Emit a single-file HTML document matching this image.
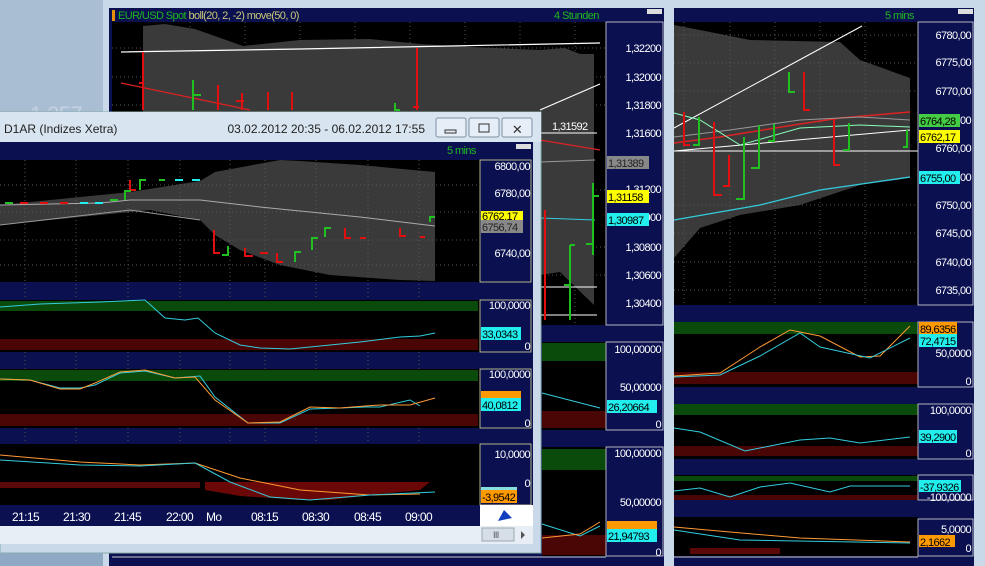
<!DOCTYPE html>
<html><head><meta charset="utf-8"><style>
html,body{margin:0;padding:0;width:985px;height:566px;overflow:hidden;background:#0a1050}
svg{display:block}
text{font-family:"Liberation Sans",sans-serif;letter-spacing:-0.6px}
</style></head><body>
<svg width="985" height="566" viewBox="0 0 985 566" xmlns="http://www.w3.org/2000/svg">
<rect x="0" y="0" width="985" height="566" fill="#0a1050"/>
<rect x="0" y="0" width="105" height="566" fill="#a9bdd3"/>
<text x="30" y="122" font-size="22" fill="#c4d2e2">1,357</text>

<!-- ===== Window 1 (EUR/USD) ===== -->
<rect x="103" y="0" width="567" height="566" fill="#c9d9ea"/>
<rect x="109" y="8" width="555" height="558" fill="#0a1050"/>
<rect x="112" y="22" width="494" height="303" fill="#000"/>
<g stroke="#555" stroke-dasharray="1,3">
<line x1="112" y1="48" x2="606" y2="48"/><line x1="112" y1="77" x2="606" y2="77"/><line x1="112" y1="105" x2="606" y2="105"/><line x1="540" y1="190" x2="606" y2="190"/><line x1="540" y1="247" x2="606" y2="247"/><line x1="540" y1="275" x2="606" y2="275"/>
<line x1="190" y1="22" x2="190" y2="110"/><line x1="245" y1="22" x2="245" y2="110"/><line x1="300" y1="22" x2="300" y2="110"/><line x1="355" y1="22" x2="355" y2="110"/><line x1="410" y1="22" x2="410" y2="110"/><line x1="465" y1="22" x2="465" y2="110"/><line x1="520" y1="22" x2="520" y2="110"/><line x1="575" y1="22" x2="575" y2="325"/>
</g>
<text x="118" y="19" font-size="11" fill="#1fb81f">EUR/USD Spot <tspan fill="#c8c878">boll(20, 2, -2) move(50, 0)</tspan></text>
<rect x="112" y="10" width="3" height="11" fill="#e89000"/>
<text x="554" y="19" font-size="11" fill="#1fb81f">4 Stunden</text>
<rect x="647" y="9" width="15" height="5" fill="#ddd"/>
<polygon points="143,26 165,24 195,29 243,46 300,40 370,39 420,44 470,47 540,50 565,48 580,54 594,54 594,305 560,272 540,275 540,160 143,160" fill="#3a3a3a"/>
<polyline points="121,52 300,49 450,46 600,43" fill="none" stroke="#fff" stroke-width="1.2"/>
<polyline points="121,83 250,110" fill="none" stroke="#d22" stroke-width="1.2"/>
<polyline points="540,140 600,150" fill="none" stroke="#d22" stroke-width="1.2"/>
<polyline points="540,162 595,160" fill="none" stroke="#999" stroke-width="1"/>
<polyline points="540,218 595,220" fill="none" stroke="#3cd" stroke-width="1"/>
<polyline points="540,110 600,84" fill="none" stroke="#fff" stroke-width="1.2"/>
<line x1="540" y1="133" x2="597" y2="133" stroke="#fff"/>
<line x1="540" y1="287" x2="597" y2="287" stroke="#fff"/>
<line x1="540" y1="315" x2="597" y2="315" stroke="#fff"/>
<text x="552" y="130" font-size="11" fill="#fff">1,31592</text>
<g stroke="#e01010" stroke-width="2" fill="none">
<path d="M143,52V110 M139,83h4 M218,85V110 M242,93V110M236,101h8 M268,92V110 M292,92V110 M417,48V110 M413,107h6 M545,210V320"/>
</g>
<g stroke="#1fc01f" stroke-width="2" fill="none">
<path d="M193,80V110 M193,95h8 M395,103V110h5 M593,183V255M593,196h6 M586,244h7 M570,245V320M570,285h-6 M575,245h-5"/>
</g>
<rect x="606" y="22" width="57" height="303" fill="#0a1050" stroke="#ddd" stroke-width="0.8"/>
<g font-size="11" fill="#fff" text-anchor="end">
<text x="661" y="52">1,32200</text><text x="661" y="81">1,32000</text><text x="661" y="109">1,31800</text><text x="661" y="137">1,31600</text><text x="661" y="193">1,31200</text><text x="661" y="221">1,31000</text><text x="661" y="251">1,30800</text><text x="661" y="279">1,30600</text><text x="661" y="307">1,30400</text>
</g>
<rect x="607" y="156" width="42" height="13" fill="#888"/><text x="608" y="167" font-size="11" fill="#222">1,31389</text>
<rect x="607" y="190" width="42" height="13" fill="#ff0"/><text x="608" y="201" font-size="11" fill="#000">1,31158</text>
<rect x="607" y="213" width="42" height="13" fill="#2ee"/><text x="608" y="224" font-size="11" fill="#000">1,30987</text>
<rect x="542" y="342" width="64" height="88" fill="#000"/>
<rect x="542" y="343" width="64" height="18" fill="#0a4a0a"/>
<rect x="542" y="411" width="64" height="17" fill="#4a0505"/>
<polyline points="542,393 600,408" stroke="#3cd" fill="none"/>
<rect x="606" y="342" width="57" height="88" fill="#0a1050" stroke="#ddd" stroke-width="0.8"/>
<g font-size="11" fill="#fff" text-anchor="end"><text x="661" y="353">100,00000</text><text x="661" y="391">50,00000</text><text x="661" y="428">0</text></g>
<rect x="607" y="400" width="50" height="13" fill="#2ee"/><text x="608" y="411" font-size="11" fill="#000">26,20664</text>
<rect x="542" y="447" width="64" height="109" fill="#000"/>
<rect x="542" y="449" width="64" height="21" fill="#0a4a0a"/>
<rect x="542" y="535" width="64" height="20" fill="#4a0505"/>
<polyline points="542,524 580,536 600,526" stroke="#3cd" fill="none"/>
<polyline points="542,538 580,534 600,522" stroke="#f93" fill="none"/>
<rect x="606" y="447" width="57" height="109" fill="#0a1050" stroke="#ddd" stroke-width="0.8"/>
<g font-size="11" fill="#fff" text-anchor="end"><text x="661" y="457">100,00000</text><text x="661" y="506">50,00000</text><text x="661" y="556">0</text></g>
<rect x="607" y="521" width="50" height="10" fill="#f90"/>
<rect x="607" y="529" width="50" height="13" fill="#2ee"/><text x="608" y="540" font-size="11" fill="#000">21,94793</text>
<line x1="112" y1="557" x2="606" y2="557" stroke="#ccc"/>

<!-- ===== Window 3 (right) ===== -->
<rect x="668" y="0" width="317" height="566" fill="#c9d9ea"/>
<rect x="674" y="8" width="300" height="558" fill="#0a1050"/>
<text x="885" y="19" font-size="11" fill="#1fb81f">5 mins</text>
<rect x="958" y="9" width="15" height="5" fill="#ddd"/>
<rect x="674" y="22" width="244" height="283" fill="#000"/>
<polygon points="674,25 700,30 750,40 840,42 860,60 910,78 910,178 860,185 800,205 740,215 700,228 674,258" fill="#3a3a3a"/>
<g stroke="#555" stroke-dasharray="1,3">
<line x1="674" y1="35" x2="918" y2="35"/><line x1="674" y1="63" x2="918" y2="63"/><line x1="674" y1="91" x2="918" y2="91"/><line x1="674" y1="205" x2="918" y2="205"/><line x1="674" y1="233" x2="918" y2="233"/><line x1="674" y1="262" x2="918" y2="262"/><line x1="674" y1="290" x2="918" y2="290"/>
<line x1="684" y1="22" x2="684" y2="305"/><line x1="730" y1="22" x2="730" y2="305"/><line x1="775" y1="22" x2="775" y2="305"/><line x1="820" y1="22" x2="820" y2="305"/><line x1="865" y1="22" x2="865" y2="305"/>
</g>
<polyline points="674,128 862,26" stroke="#fff" fill="none"/>
<polyline points="674,151 910,130" stroke="#fff" fill="none"/>
<line x1="674" y1="151" x2="918" y2="151" stroke="#fff"/>
<polyline points="674,143 720,137 800,124 840,118 910,112" stroke="#d22" fill="none" stroke-width="1.5"/>
<polyline points="674,137 730,130 800,120 860,117 910,120" stroke="#999" fill="none"/>
<polyline points="674,113 700,120 740,145 800,128 860,125 910,127" stroke="#8fb" fill="none"/>
<polyline points="674,220 760,205 820,190 910,177" stroke="#3cd" fill="none" stroke-width="1.3"/>
<g stroke="#e01010" stroke-width="2" fill="none"><path d="M684,112V145h6 M714,122V195h8 M729,155V186h-6 M804,72V110h6 M834,119V165h6"/></g>
<g stroke="#1fc01f" stroke-width="2" fill="none"><path d="M699,117V145h-6 M744,137V199h-8 M759,125V168h-8 M774,124V141h-6 M789,72V92h6 M849,123V150h-6 M907,130V147h-4"/></g>
<rect x="918" y="22" width="55" height="283" fill="#0a1050" stroke="#ddd" stroke-width="0.8"/>
<g font-size="11" fill="#fff" text-anchor="end">
<text x="971" y="39">6780,00</text><text x="971" y="66">6775,00</text><text x="971" y="95">6770,00</text><text x="971" y="124">6765,00</text><text x="971" y="152">6760,00</text><text x="971" y="181">6755,00</text><text x="971" y="209">6750,00</text><text x="971" y="237">6745,00</text><text x="971" y="266">6740,00</text><text x="971" y="294">6735,00</text>
</g>
<rect x="919" y="114" width="41" height="13" fill="#4c4"/><text x="920" y="125" font-size="11" fill="#000">6764,28</text>
<rect x="919" y="130" width="41" height="13" fill="#ff0"/><text x="920" y="141" font-size="11" fill="#000">6762,17</text>
<rect x="919" y="171" width="41" height="13" fill="#2ee"/><text x="920" y="182" font-size="11" fill="#000">6755,00</text>
<rect x="674" y="322" width="244" height="65" fill="#000"/>
<rect x="674" y="322" width="244" height="12" fill="#0a4a0a"/>
<rect x="674" y="372" width="244" height="12" fill="#4a0505"/>
<polyline points="674,376 720,373 760,347 790,330 820,336 860,357 880,356 910,326" stroke="#f93" fill="none"/>
<polyline points="674,377 720,375 760,356 800,333 820,347 870,358 910,338" stroke="#3cd" fill="none"/>
<rect x="918" y="322" width="55" height="65" fill="#0a1050" stroke="#ddd" stroke-width="0.8"/>
<rect x="919" y="322" width="38" height="13" fill="#f90"/><text x="920" y="333" font-size="11" fill="#000">89,6356</text>
<rect x="919" y="334" width="38" height="13" fill="#2ee"/><text x="920" y="345" font-size="11" fill="#000">72,4715</text>
<g font-size="11" fill="#fff" text-anchor="end"><text x="971" y="357">50,0000</text><text x="971" y="385">0</text></g>
<rect x="674" y="404" width="244" height="55" fill="#000"/>
<rect x="674" y="404" width="244" height="11" fill="#0a4a0a"/>
<rect x="674" y="446" width="244" height="10" fill="#4a0505"/>
<polyline points="674,428 700,432 745,451 800,440 830,438 860,443 910,437" stroke="#3cd" fill="none"/>
<rect x="918" y="404" width="55" height="55" fill="#0a1050" stroke="#ddd" stroke-width="0.8"/>
<g font-size="11" fill="#fff" text-anchor="end"><text x="971" y="414">100,0000</text><text x="971" y="457">0</text></g>
<rect x="919" y="430" width="38" height="13" fill="#2ee"/><text x="920" y="441" font-size="11" fill="#000">39,2900</text>
<rect x="674" y="475" width="244" height="25" fill="#000"/>
<rect x="674" y="476" width="244" height="5" fill="#0a4a0a"/>
<rect x="674" y="495" width="244" height="5" fill="#4a0505"/>
<polyline points="674,491 700,488 730,497 760,487 790,483 830,492 850,486 910,486" stroke="#3cd" fill="none"/>
<rect x="918" y="475" width="55" height="25" fill="#0a1050" stroke="#ddd" stroke-width="0.8"/>
<rect x="919" y="480" width="42" height="12" fill="#2ee"/><text x="920" y="491" font-size="11" fill="#000">-37,9326</text>
<text x="971" y="501" font-size="11" fill="#fff" text-anchor="end">-100,0000</text>
<rect x="674" y="517" width="244" height="39" fill="#000"/>
<polyline points="674,527 730,532 800,538 910,542" stroke="#f93" fill="none"/>
<polyline points="674,530 740,540 910,543" stroke="#3cd" fill="none"/>
<rect x="690" y="548" width="90" height="6" fill="#5a0808"/>
<rect x="918" y="519" width="55" height="37" fill="#0a1050" stroke="#ddd" stroke-width="0.8"/>
<g font-size="11" fill="#fff" text-anchor="end"><text x="971" y="533">5,0000</text><text x="971" y="552">0</text></g>
<rect x="919" y="535" width="36" height="12" fill="#f90"/><text x="920" y="546" font-size="11" fill="#000">2,1662</text>
<rect x="674" y="557" width="244" height="9" fill="#0a1050"/>
<line x1="674" y1="557" x2="918" y2="557" stroke="#ccc"/>

<!-- ===== Front window D1AR ===== -->
<rect x="0" y="112" width="541" height="441" fill="#c9d9ea" stroke="#8aa" stroke-width="1"/>
<rect x="0" y="112" width="541" height="30" fill="#d8e4f0"/>
<text x="4" y="133" font-size="12" fill="#222" style="letter-spacing:0">D1AR (Indizes Xetra)</text>
<text x="425" y="133" font-size="12" fill="#222" text-anchor="end" style="letter-spacing:0">03.02.2012 20:35 - 06.02.2012 17:55</text>
<g fill="#e6eef7" stroke="#7f90a4"><rect x="436" y="118" width="30" height="19" rx="2"/><rect x="469" y="118" width="30" height="19" rx="2"/><rect x="502" y="118" width="30" height="19" rx="2"/></g>
<rect x="445" y="130" width="11" height="3" fill="none" stroke="#333"/>
<rect x="479" y="124" width="10" height="8" fill="none" stroke="#333"/>
<text x="517" y="134" font-size="13" fill="#333" text-anchor="middle">✕</text>
<rect x="0" y="142" width="533" height="384" fill="#0a1050"/>
<text x="447" y="154" font-size="11" fill="#1fb81f">5 mins</text>
<rect x="516" y="144" width="15" height="5" fill="#ddd"/>
<rect x="0" y="160" width="480" height="122" fill="#000"/>
<polygon points="0,205 130,192 200,181 215,172 280,160 300,161 360,165 435,172 435,281 400,280 330,275 280,265 240,250 215,235 200,220 150,210 100,215 0,225" fill="#3a3a3a"/>
<g stroke="#555" stroke-dasharray="1,3">
<line x1="0" y1="185" x2="480" y2="185"/><line x1="0" y1="212" x2="480" y2="212"/><line x1="0" y1="240" x2="480" y2="240"/><line x1="0" y1="265" x2="480" y2="265"/>
<line x1="25" y1="160" x2="25" y2="505"/><line x1="76" y1="160" x2="76" y2="505"/><line x1="128" y1="160" x2="128" y2="505"/><line x1="180" y1="160" x2="180" y2="505"/><line x1="230" y1="160" x2="230" y2="505"/><line x1="265" y1="160" x2="265" y2="505"/><line x1="316" y1="160" x2="316" y2="505"/><line x1="368" y1="160" x2="368" y2="505"/><line x1="419" y1="160" x2="419" y2="505"/>
</g>
<polyline points="0,205 100,203 130,200 200,200 260,207 360,217 435,226" stroke="#aaa" fill="none"/>
<polyline points="0,225 130,210 200,220" stroke="#999" fill="none"/>
<g stroke="#e01010" stroke-width="2" fill="none"><path d="M20,203h8 M40,203h8 M60,203h8 M130,180V190h6 M214,230V253h6 M245,248V256h8 M260,253h8 M277,253V262h6 M345,228V238h6 M360,238h6 M400,228V236h6 M420,237h5"/></g>
<g stroke="#1fc01f" stroke-width="2" fill="none"><path d="M5,203h8 M110,200h8 M125,200V191h6 M140,190V180h6 M165,180h-6 M228,246V255h-6 M295,262V252h6 M312,250V238h6 M325,237V228h6 M430,222V217h5"/></g>
<g stroke="#2ee" stroke-width="2" fill="none"><path d="M80,203h8 M95,203h8 M175,180h8 M192,180h8"/></g>
<rect x="480" y="160" width="51" height="122" fill="#0a1050" stroke="#dd9" stroke-width="0.8"/>
<g font-size="11" fill="#fff" text-anchor="end"><text x="530" y="170">6800,00</text><text x="530" y="197">6780,00</text><text x="530" y="257">6740,00</text></g>
<rect x="481" y="211" width="42" height="10" fill="#ff0"/><text x="482" y="220" font-size="11" fill="#000">6762,17</text>
<rect x="481" y="220" width="42" height="13" fill="#888"/><text x="482" y="231" font-size="11" fill="#222">6756,74</text>
<rect x="0" y="300" width="480" height="52" fill="#000"/>
<rect x="0" y="301" width="478" height="10" fill="#0a4a0a"/>
<rect x="0" y="339" width="478" height="11" fill="#4a0505"/>
<polyline points="0,307 40,304 100,302 145,300 165,318 185,320 198,318 215,333 240,345 260,348 290,349 320,346 360,342 400,337 420,336 435,333" stroke="#3cd" fill="none"/>
<rect x="480" y="300" width="51" height="52" fill="#0a1050" stroke="#dd9" stroke-width="0.8"/>
<text x="530" y="309" font-size="11" fill="#fff" text-anchor="end">100,0000</text>
<text x="530" y="350" font-size="11" fill="#fff" text-anchor="end">0</text>
<rect x="481" y="327" width="40" height="13" fill="#2ee"/><text x="482" y="338" font-size="11" fill="#000">33,0343</text>
<rect x="0" y="369" width="480" height="59" fill="#000"/>
<rect x="0" y="370" width="478" height="11" fill="#0a4a0a"/>
<rect x="0" y="414" width="478" height="12" fill="#4a0505"/>
<polyline points="0,379 30,380 60,388 80,388 95,385 120,373 145,371 175,378 200,376 215,397 248,423 280,423 310,409 340,408 365,407 380,407 410,400 420,406" stroke="#3cd" fill="none"/>
<polyline points="0,379 30,380 60,389 80,389 95,383 120,372 145,370 175,378 195,377 215,400 248,423 280,422 310,407 340,408 365,406 380,405 410,405 435,398" stroke="#f93" fill="none"/>
<rect x="480" y="369" width="51" height="59" fill="#0a1050" stroke="#dd9" stroke-width="0.8"/>
<text x="530" y="378" font-size="11" fill="#fff" text-anchor="end">100,0000</text>
<text x="530" y="427" font-size="11" fill="#fff" text-anchor="end">0</text>
<rect x="481" y="391" width="40" height="9" fill="#f90"/>
<rect x="481" y="398" width="40" height="13" fill="#2ee"/><text x="482" y="409" font-size="11" fill="#000">40,0812</text>
<rect x="0" y="444" width="480" height="61" fill="#000"/>
<rect x="0" y="482" width="200" height="6" fill="#5a0808"/>
<polygon points="205,482 430,482 420,490 380,494 330,500 300,500 270,498 240,496 205,490" fill="#6a0808"/>
<polyline points="0,455 80,462 140,465 195,463 240,478 300,490 370,495 420,494" stroke="#f93" fill="none"/>
<polyline points="0,460 80,465 140,466 195,463 230,482 270,497 310,500 370,495 435,492" stroke="#3cd" fill="none"/>
<rect x="480" y="444" width="51" height="61" fill="#0a1050" stroke="#dd9" stroke-width="0.8"/>
<text x="530" y="458" font-size="11" fill="#fff" text-anchor="end">10,0000</text>
<text x="530" y="487" font-size="11" fill="#fff" text-anchor="end">0</text>
<rect x="481" y="487" width="36" height="4" fill="#8dd"/>
<rect x="481" y="490" width="36" height="13" fill="#f90"/><text x="482" y="501" font-size="11" fill="#000">-3,9542</text>
<g font-size="12" fill="#fff"><text x="12" y="521">21:15</text><text x="63" y="521">21:30</text><text x="114" y="521">21:45</text><text x="166" y="521">22:00</text><text x="206" y="521">Mo</text><text x="251" y="521">08:15</text><text x="302" y="521">08:30</text><text x="354" y="521">08:45</text><text x="405" y="521">09:00</text></g>
<rect x="480" y="505" width="53" height="21" fill="#fff"/>
<path d="M498,521 L504,510 L512,518 Z" fill="#1040c0"/>
<rect x="0" y="526" width="533" height="18" fill="#e8eef5"/>
<rect x="482" y="528" width="32" height="13" fill="#d6dee8" stroke="#9aa"/>
<text x="493" y="538" font-size="9" fill="#555">III</text>
<path d="M521,531 l4,4 l-4,4z" fill="#555"/>
<rect x="0" y="553" width="103" height="13" fill="#8fa8c4"/>
</svg>
</body></html>
